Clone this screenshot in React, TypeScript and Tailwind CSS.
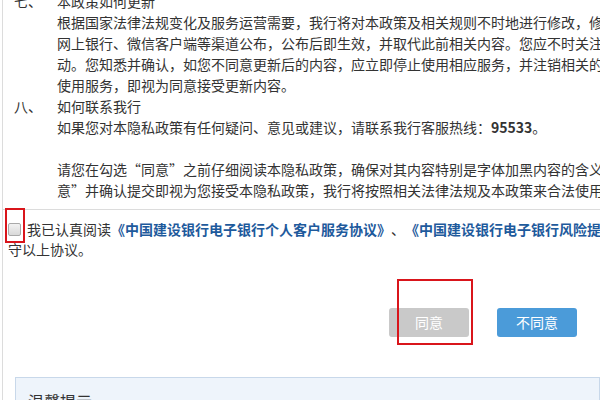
import React from "react";

const sections = [
  {
    mark: "七、",
    lines: [
      "本政策如何更新",
      "根据国家法律法规变化及服务运营需要，我行将对本政策及相关规则不时地进行修改，修改后的内容会通过我行门户网站、",
      "网上银行、微信客户端等渠道公布，公布后即生效，并取代此前相关内容。您应不时关注相关公告、提示信息及协议、规则等相关内容的变",
      "动。您知悉并确认，如您不同意更新后的内容，应立即停止使用相应服务，并注销相关的用户，我行将停止收集您的相关个人信息；如您继续",
      "使用服务，即视为同意接受更新内容。",
    ],
  },
];

const App = () => {
  return (
    <div
      className="w-[600px] h-[400px] overflow-hidden bg-white text-[#333] text-[14px]"
      style={{ fontFamily: '"Noto Sans CJK SC", "Liberation Sans", sans-serif' }}
    >
      <div className="relative ml-[2px] h-full border-l border-[#dcdcdc]">
        {/* policy scroll box */}
        <div className="h-[210px] overflow-hidden border-b border-[#dcdcdc]">
          <div className="-mt-[9px] pl-[11px] leading-[21px] whitespace-nowrap">
            {sections.map((s) => (
              <div key={s.mark} className="flex">
                <div className="w-[43px] shrink-0">{s.mark}</div>
                <div>
                  {s.lines.map((l) => (
                    <div key={l}>{l}</div>
                  ))}
                </div>
              </div>
            ))}
            <div className="flex">
              <div className="w-[43px] shrink-0">八、</div>
              <div>
                <div>如何联系我行</div>
                <div>
                  如果您对本隐私政策有任何疑问、意见或建议，请联系我行客服热线：
                  <b>95533</b>。
                </div>
                <div className="h-[21px]" />
                <div>
                  请您在勾选“同意”之前仔细阅读本隐私政策，确保对其内容特别是字体加黑内容的含义及相应法律后果已全部知晓并充分理解。您勾选“同
                </div>
                <div>
                  意”并确认提交即视为您接受本隐私政策，我行将按照相关法律法规及本政策来合法使用和保护您的个人信息。
                </div>
              </div>
            </div>
          </div>
        </div>

        {/* agreement checkbox */}
        <div className="pt-[9px] pl-[5px] leading-[20px]">
          <div className="flex items-center whitespace-nowrap">
            <span className="inline-block w-[13px] h-[13px] shrink-0 rounded-[2px] border border-[#a9a9a9] bg-gradient-to-b from-[#f2f2f2] to-[#d9d9d9]" />
            <span className="ml-[6px]">我已认真阅读</span>
            <span className="font-bold text-[#1e5a9c]">
              《中国建设银行电子银行个人客户服务协议》
            </span>
            <span>、</span>
            <span className="font-bold text-[#1e5a9c]">
              《中国建设银行电子银行风险提示》
            </span>
            <span>，并同意遵</span>
          </div>
          <div>守以上协议。</div>
        </div>

        {/* buttons */}
        <div className="flex justify-end gap-[28px] pr-[23px] mt-[49px]">
          <button className="w-[80px] h-[29px] rounded-[3px] bg-[#c9c9c9] text-white text-[14px]">
            同意
          </button>
          <button className="w-[80px] h-[29px] rounded-[3px] bg-[#4b9bd9] text-white text-[14px]">
            不同意
          </button>
        </div>

        {/* tips box */}
        <div className="ml-[12px] mt-[40px] h-[60px] border border-[#c8d8ea] bg-[#eef4fb] pl-[12px] pt-[12px] text-[16px] leading-[22px]">
          温馨提示
        </div>

        {/* red annotation marks */}
        <div className="absolute left-[2px] top-[208px] w-[20px] h-[35px] border-2 border-[#d9151b]" />
        <div className="absolute left-[394px] top-[279px] w-[76px] h-[66px] border-2 border-[#d9151b]" />
      </div>
    </div>
  );
};

export default App;
